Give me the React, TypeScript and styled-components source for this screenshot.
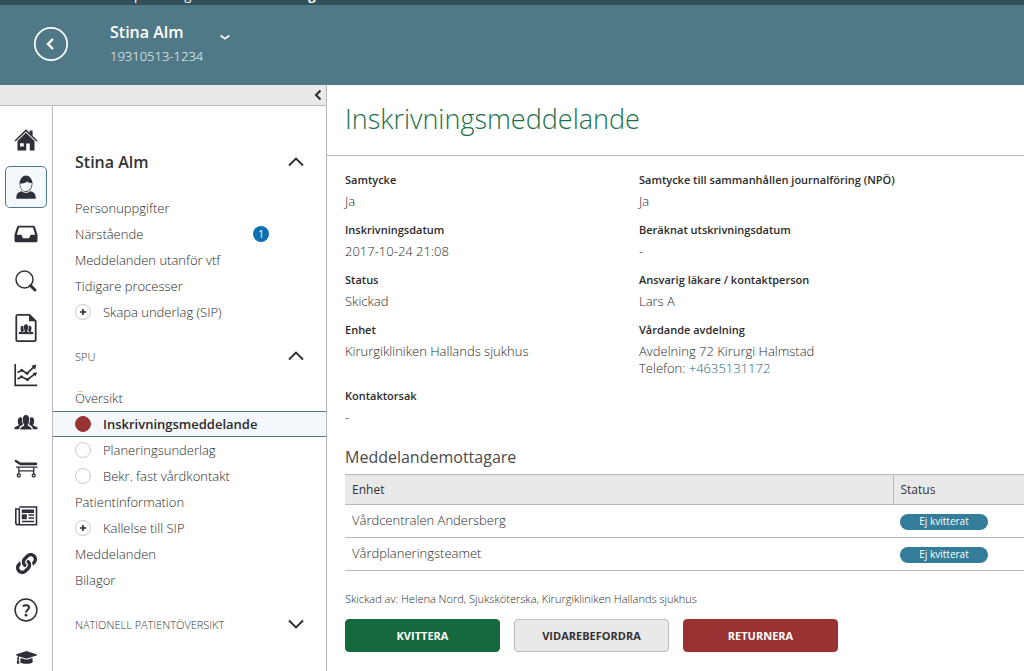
import React from "react";
import styled, { createGlobalStyle, css } from "styled-components";
import { FaGraduationCap, FaLink } from "react-icons/fa";

const GlobalStyle = createGlobalStyle`
  *, *::before, *::after { box-sizing: border-box; }
  body {
    margin: 0;
    background: #fff;
    color: #2b2b2b;
    font-family: "Open Sans", "Noto Sans", sans-serif;
    font-size: 13px;
    font-weight: 300;
    line-height: 17px;
  }
  button { font: inherit; color: inherit; cursor: pointer; }
  h1, h2, h3, p, ul, dl, dd { margin: 0; padding: 0; }
`;

const Page = styled.div`
  display: flex;
  flex-direction: column;
  height: 100vh;
  overflow: hidden;
`;

const SystemBar = styled.div`
  flex: none;
  display: flex;
  align-items: flex-end;
  gap: 56px;
  height: 5px;
  padding: 0 0 2px 60px;
  overflow: hidden;
  background: #33505a;
  color: #fff;
  font-weight: 400;
  line-height: 16px;
`;

const Header = styled.header`
  flex: none;
  display: flex;
  align-items: center;
  height: 80px;
  padding: 0 0 2px 33px;
  background: #4f7986;
  color: #fff;
`;

const BackButton = styled.button`
  display: flex;
  padding: 0;
  border: 0;
  background: none;
`;

const Patient = styled.div`
  width: 110px;
  margin-left: 41px;
  strong {
    display: block;
    font-size: 16px;
    font-weight: 600;
    line-height: 24px;
  }
  span {
    display: block;
    line-height: 24px;
  }
`;

const PatientMenu = styled.button`
  align-self: flex-start;
  display: flex;
  margin-top: 29px;
  padding: 0;
  border: 0;
  background: none;
`;

const Body = styled.div`
  flex: 1;
  display: flex;
  min-height: 0;
`;

const Sidebar = styled.aside`
  flex: none;
  display: flex;
  flex-direction: column;
  width: 327px;
  border-right: 1px solid #b9b9b9;
`;

const CollapseBar = styled.div`
  flex: none;
  display: flex;
  justify-content: flex-end;
  align-items: center;
  height: 21px;
  padding-right: 4px;
  border-bottom: 1px solid #b9b9b9;
  background: #e9e9e9;
`;

const SidebarColumns = styled.div`
  flex: 1;
  display: flex;
  min-height: 0;
`;

const IconRail = styled.nav`
  flex: none;
  display: flex;
  flex-direction: column;
  align-items: center;
  gap: 5px;
  width: 53px;
  padding-top: 13px;
  overflow-y: auto;
  scrollbar-width: none;
  border-right: 1px solid #b9b9b9;
`;

const RailButton = styled.button<{ $active?: boolean }>`
  flex: none;
  display: flex;
  align-items: center;
  justify-content: center;
  width: 42px;
  height: 42px;
  padding: 0;
  border: 1px solid ${(p) => (p.$active ? "#4f7986" : "transparent")};
  border-radius: 5px;
  background: ${(p) => (p.$active ? "#f4f9fd" : "none")};
  color: #2f2f38;
`;

const Menu = styled.nav`
  flex: 1;
  padding-top: 36px;
  overflow-y: auto;
  scrollbar-width: none;
`;

const SectionHead = styled.button<{ $minor?: boolean }>`
  display: flex;
  align-items: center;
  justify-content: space-between;
  width: 100%;
  height: 40px;
  padding: 0 22px;
  border: 0;
  background: none;
  color: #333;
  font-size: 16px;
  font-weight: 600;
  ${(p) =>
    p.$minor &&
    css`
      height: 32px;
      font-size: 11px;
      font-weight: 300;
    `}
`;

const MenuList = styled.ul`
  padding: 13px 0 15px;
  list-style: none;
`;

const MenuItem = styled.a<{ $active?: boolean }>`
  display: flex;
  align-items: center;
  height: 26px;
  padding: 0 57px 0 22px;
  border: solid transparent;
  border-width: 1px 0;
  color: inherit;
  text-decoration: none;
  ${(p) =>
    p.$active &&
    css`
      border-color: #4f7986;
      background: #f4f8fc;
      font-weight: 600;
    `}
`;

const Marker = styled.span<{ $filled?: boolean }>`
  display: flex;
  align-items: center;
  justify-content: center;
  width: 16px;
  height: 16px;
  margin-right: 12px;
  border: 1px solid ${(p) => (p.$filled ? "#993333" : "#c4cdd2")};
  border-radius: 50%;
  background: ${(p) => (p.$filled ? "#993333" : "#fff")};
`;

const CountBadge = styled.span`
  width: 16px;
  height: 16px;
  margin-left: auto;
  border-radius: 50%;
  background: #0f6fb0;
  color: #fff;
  font-size: 10px;
  font-weight: 400;
  line-height: 16px;
  text-align: center;
`;

const Main = styled.main`
  flex: 1;
  min-width: 0;
  overflow: hidden;
`;

const Title = styled.h1`
  height: 71px;
  padding: 16px 18px 0;
  border-bottom: 1px solid #b9b9b9;
  color: #1b7048;
  font-size: 27px;
  font-weight: 300;
  line-height: 36px;
`;

const Content = styled.div`
  padding: 15px 0 16px 18px;
`;

const Facts = styled.dl`
  display: grid;
  grid-template-columns: 294px 1fr;
  row-gap: 10px;
`;

const Fact = styled.div`
  min-height: 40px;
  dt {
    font-size: 11px;
    font-weight: 600;
    line-height: 18px;
  }
  dd {
    margin-top: 4px;
  }
  a {
    color: #1f6580;
    text-decoration: none;
  }
`;

const SubTitle = styled.h2`
  margin-top: 19px;
  color: #4a4a4a;
  font-size: 16px;
  font-weight: 400;
  line-height: 22px;
`;

const Table = styled.table`
  width: 100%;
  margin-top: 6px;
  border-collapse: collapse;
  th,
  td {
    height: 33px;
    padding: 0 7px;
    border: solid #b9b9b9;
    border-width: 1px 0;
    text-align: left;
  }
  td {
    padding-bottom: 2px;
  }
  th {
    height: 30px;
    background: #e9e9e9;
    color: #333;
    font-size: 12px;
    font-weight: 400;
  }
  th + th {
    width: 131px;
    border-left-width: 1px;
  }
`;

const Tag = styled.span`
  display: block;
  width: 88px;
  height: 16px;
  margin-top: 3px;
  border-radius: 8px;
  background: #337d9a;
  color: #fff;
  font-size: 10px;
  font-weight: 400;
  line-height: 15px;
  text-align: center;
`;

const SentBy = styled.p`
  margin-top: 19px;
  font-size: 11px;
`;

const Actions = styled.div`
  display: flex;
  gap: 14px;
  margin-top: 12px;
`;

const tones = {
  green: ["#14693f", "#14693f", "#fff"],
  grey: ["#e9e9e9", "#bdbdbd", "#333"],
  red: ["#993333", "#993333", "#fff"],
};

const ActionButton = styled.button<{ $tone: keyof typeof tones }>`
  width: 155px;
  height: 33px;
  padding: 0;
  border: 1px solid ${(p) => tones[p.$tone][1]};
  border-radius: 4px;
  background: ${(p) => tones[p.$tone][0]};
  color: ${(p) => tones[p.$tone][2]};
  font-size: 11px;
  font-weight: 700;
`;

const Chevron = ({ down }: { down?: boolean }) => (
  <svg width="16" height="10" viewBox="0 0 16 10" fill="none" stroke="#2b2b2b" strokeWidth="1.8">
    <path d={down ? "M1 1.5 8 8.5 15 1.5" : "M1 8.5 8 1.5 15 8.5"} />
  </svg>
);

const Plus = () => (
  <svg width="8" height="8" viewBox="0 0 8 8" stroke="#2b2b2b" strokeWidth="1.6">
    <path d="M4 1v6M1 4h6" />
  </svg>
);

const Svg = ({ children }: { children: React.ReactNode }) => (
  <svg width="24" height="24" viewBox="0 0 24 24" fill="currentColor">
    {children}
  </svg>
);

const HomeIcon = () => (
  <Svg>
    <path d="M.5 12.6 12 1.3l3.6 3.5V2.6h3v5.1l4.9 4.9-1 .9L12 3.4 1.5 13.5z" />
    <path fillRule="evenodd" d="M12 4.800 20.500 13v9.500h-4.700v-7h-3.600v7H3.500V13zM6 15.200v3.200h3.800v-3.200z" />
  </Svg>
);

const PersonIcon = () => (
  <Svg>
    <path d="M2.300 23.800c-.2-4.600 1.200-6.800 5.400-7.600h8.600c4.200.8 5.600 3 5.400 7.600z" />
    <ellipse cx="12" cy="9" rx="7.300" ry="8.900" fill="#f4f9fd" />
    <ellipse cx="12" cy="8.700" rx="6.500" ry="8.200" />
    <path fill="#f4f9fd" d="M6.300 8.400c3 .3 5.300-.5 6.800-1.900 1.200 1.100 2.800 1.600 4.600 1.600.2 4.800-2.200 8-5.700 8s-5.900-3-5.700-7.700z" />
  </Svg>
);

const InboxIcon = () => (
  <Svg>
    <path fillRule="evenodd" d="M4.800 3.700h14.400c.9 0 1.500.5 1.800 1.300l2.500 7.800v5.700c0 1.100-.7 1.800-1.800 1.800H2.300C1.200 20.300.5 19.600.5 18.500v-5.700L3 5c.3-.8.9-1.300 1.800-1.300zm.3 1.900-2.300 7.200h4.600l1.500 3.400h6.200l1.500-3.400h4.600l-2.300-7.200z" />
  </Svg>
);

const SearchIcon = () => (
  <Svg>
    <circle cx="10.500" cy="10.500" r="8.500" fill="none" stroke="currentColor" strokeWidth="1.500" />
    <path d="m16.500 16.500 4.500 4.500" stroke="currentColor" strokeWidth="3" strokeLinecap="round" />
  </Svg>
);

const groupPath =
  "M1 18c0-1.700 3.600-1.600 3.900-3.200C3.500 13.300 3 7.200 6.400 7.200c.7 0 1.200.2 1.600.6-.3 2.500 0 4.500 1 6.200-.4 1.600-3.300 1.500-3.600 4zM23 18c0-1.700-3.600-1.600-3.900-3.200 1.400-1.500 1.900-7.600-1.500-7.600-.7 0-1.200.2-1.600.6.3 2.500 0 4.500-1 6.200.4 1.600 3.300 1.500 3.600 4zM6.300 19.500c0-3.300 3.800-2.500 4-4.700C8.300 12.600 7.600 5 12 5s3.700 7.600 1.700 9.800c.2 2.200 4 1.400 4 4.700z";

const GroupIcon = () => (
  <Svg>
    <path d={groupPath} />
    <path d="M.5 17.300h4.700v2H.5zM18.800 17.300h4.700v2h-4.700z" />
  </Svg>
);

const GroupFileIcon = () => (
  <svg width="24" height="30" viewBox="0 0 24 30" fill="currentColor">
    <path d="M4 1.800h11.500l6.200 6.300V27c0 .8-.5 1.200-1.200 1.200H3.500c-.8 0-1.200-.4-1.200-1.200V3.200c0-.9.7-1.400 1.700-1.400z" fill="none" stroke="currentColor" strokeWidth="1.800" />
    <path d="M15 1.500v6.800h7z" />
    <path transform="translate(4 8) scale(.67)" d={groupPath} />
    <path d="M4.800 19.300h14.400v1.800H4.800z" />
  </svg>
);

const ChartIcon = () => (
  <Svg>
    <g fill="none" stroke="currentColor" strokeWidth="1.700">
      <path d="M1.200 1v21.300h22" />
      <path d="m3.500 9.500 4.300-2.300 5.200 3.200 6.500-6M3.500 16l4-2.300 6 3 7-5.500" />
    </g>
    <path d="m22.300 1.500-1.200 5.200-3.800-4zM23 9.200l-1.300 4.300-3-3.400z" />
    <circle cx="7.800" cy="7.300" r="1.500" />
    <circle cx="13" cy="10.300" r="1.500" />
    <circle cx="7.500" cy="13.800" r="1.500" />
    <circle cx="13.500" cy="16.600" r="1.500" />
  </Svg>
);

const StretcherIcon = () => (
  <Svg>
    <path d="M.8 3.300c.4-.7 1-.7 1.600-.4l4 2.700h15.800c1.500 0 1.500 2.600 0 2.600H6.200L1.300 5c-.6-.4-.8-1-.5-1.700z" />
    <g fill="none" stroke="currentColor" strokeWidth="1.300">
      <path d="M2 10.200h21.500M4.800 10v7M19.700 10v7M4.800 13.800h14.900" />
      <circle cx="4.800" cy="18.500" r="1.500" />
      <circle cx="19.700" cy="18.500" r="1.500" />
    </g>
  </Svg>
);

const NewsIcon = () => (
  <Svg>
    <g fill="none" stroke="currentColor" strokeWidth="1.600">
      <path d="M5.300 3h17.200v17.700H3.800c-1.300 0-2-.8-2-2V5h3.500v14c0 1-.6 1.700-1.500 1.700" />
      <path d="M14.500 11h5.500M14.500 14h5.500M8 17.500h12" />
    </g>
    <path d="M7.800 5.500H20v3.400H7.800zM7.800 10.300h5v5h-5z" />
  </Svg>
);

const HelpIcon = () => (
  <Svg>
    <circle cx="12" cy="12" r="10.900" fill="none" stroke="currentColor" strokeWidth="1.500" />
    <path d="M8.800 8.200c1.900-1.500 6.300-1.600 6.300 1.300 0 2.200-3.100 2.300-3.100 4.900" fill="none" stroke="currentColor" strokeWidth="2" />
    <circle cx="12" cy="17.200" r="1.400" />
  </Svg>
);

const rail = [
  { label: "Hem", icon: <HomeIcon /> },
  { label: "Patient", icon: <PersonIcon />, active: true },
  { label: "Inkorg", icon: <InboxIcon /> },
  { label: "Sök", icon: <SearchIcon /> },
  { label: "Gruppdokument", icon: <GroupFileIcon /> },
  { label: "Statistik", icon: <ChartIcon /> },
  { label: "Grupper", icon: <GroupIcon /> },
  { label: "Vårdplatser", icon: <StretcherIcon /> },
  { label: "Nyheter", icon: <NewsIcon /> },
  { label: "Länkar", icon: <FaLink size={21} /> },
  { label: "Hjälp", icon: <HelpIcon /> },
  { label: "Utbildning", icon: <FaGraduationCap size={21} /> },
];

type Item = { text: string; marker?: "plus" | "empty" | "filled"; count?: number };

const patientItems: Item[] = [
  { text: "Personuppgifter" },
  { text: "Närstående", count: 1 },
  { text: "Meddelanden utanför vtf" },
  { text: "Tidigare processer" },
  { text: "Skapa underlag (SIP)", marker: "plus" },
];

const spuItems: Item[] = [
  { text: "Översikt" },
  { text: "Inskrivningsmeddelande", marker: "filled" },
  { text: "Planeringsunderlag", marker: "empty" },
  { text: "Bekr. fast vårdkontakt", marker: "empty" },
  { text: "Patientinformation" },
  { text: "Kallelse till SIP", marker: "plus" },
  { text: "Meddelanden" },
  { text: "Bilagor" },
];

const Items = ({ items }: { items: Item[] }) => (
  <MenuList>
    {items.map((item) => (
      <li key={item.text}>
        <MenuItem href="#" $active={item.marker === "filled"}>
          {item.marker && (
            <Marker $filled={item.marker === "filled"}>{item.marker === "plus" && <Plus />}</Marker>
          )}
          {item.text}
          {item.count && <CountBadge>{item.count}</CountBadge>}
        </MenuItem>
      </li>
    ))}
  </MenuList>
);

const facts: [string, React.ReactNode][] = [
  ["Samtycke", "Ja"],
  ["Samtycke till sammanhållen journalföring (NPÖ)", "Ja"],
  ["Inskrivningsdatum", "2017-10-24 21:08"],
  ["Beräknat utskrivningsdatum", "-"],
  ["Status", "Skickad"],
  ["Ansvarig läkare / kontaktperson", "Lars A"],
  ["Enhet", "Kirurgikliniken Hallands sjukhus"],
  [
    "Vårdande avdelning",
    <>
      Avdelning 72 Kirurgi Halmstad
      <br />
      Telefon: <a href="tel:+4635131172">+4635131172</a>
    </>,
  ],
  ["Kontaktorsak", "-"],
];

const recipients = ["Vårdcentralen Andersberg", "Vårdplaneringsteamet"];

export default function App() {
  return (
    <Page>
      <GlobalStyle />
      <SystemBar>
        <span>Samordnad planering</span>
        <strong>Utbildning</strong>
      </SystemBar>
      <Header>
        <BackButton aria-label="Tillbaka">
          <svg width="36" height="36" viewBox="0 0 36 36" fill="none" stroke="#fff">
            <circle cx="18" cy="18" r="16.200" strokeWidth="1.700" />
            <path d="m20 13-5 5 5 5" strokeWidth="2.400" />
          </svg>
        </BackButton>
        <Patient>
          <strong>Stina Alm</strong>
          <span>19310513-1234</span>
        </Patient>
        <PatientMenu aria-label="Visa patientuppgifter">
          <svg width="10" height="7" viewBox="0 0 10 7" fill="none" stroke="#fff" strokeWidth="1.700">
            <path d="M.6 1.500 5 4.600l4.400-3.100" />
          </svg>
        </PatientMenu>
      </Header>
      <Body>
        <Sidebar>
          <CollapseBar>
            <BackButton aria-label="Fäll ihop menyn">
              <svg width="8" height="12" viewBox="0 0 8 12" fill="none" stroke="#2b2b2b" strokeWidth="2">
                <path d="M6.500 1.500 2 6l4.500 4.500" />
              </svg>
            </BackButton>
          </CollapseBar>
          <SidebarColumns>
            <IconRail>
              {rail.map((r) => (
                <RailButton key={r.label} aria-label={r.label} $active={r.active}>
                  {r.icon}
                </RailButton>
              ))}
            </IconRail>
            <Menu>
              <SectionHead>
                Stina Alm <Chevron />
              </SectionHead>
              <Items items={patientItems} />
              <SectionHead $minor>
                SPU <Chevron />
              </SectionHead>
              <Items items={spuItems} />
              <SectionHead $minor>
                NATIONELL PATIENTÖVERSIKT <Chevron down />
              </SectionHead>
            </Menu>
          </SidebarColumns>
        </Sidebar>
        <Main>
          <Title>Inskrivningsmeddelande</Title>
          <Content>
            <Facts>
              {facts.map(([term, value]) => (
                <Fact key={term}>
                  <dt>{term}</dt>
                  <dd>{value}</dd>
                </Fact>
              ))}
            </Facts>
            <SubTitle>Meddelandemottagare</SubTitle>
            <Table>
              <thead>
                <tr>
                  <th scope="col">Enhet</th>
                  <th scope="col">Status</th>
                </tr>
              </thead>
              <tbody>
                {recipients.map((name) => (
                  <tr key={name}>
                    <td>{name}</td>
                    <td>
                      <Tag>Ej kvitterat</Tag>
                    </td>
                  </tr>
                ))}
              </tbody>
            </Table>
            <SentBy>Skickad av: Helena Nord, Sjuksköterska, Kirurgikliniken Hallands sjukhus</SentBy>
            <Actions>
              <ActionButton $tone="green">KVITTERA</ActionButton>
              <ActionButton $tone="grey">VIDAREBEFORDRA</ActionButton>
              <ActionButton $tone="red">RETURNERA</ActionButton>
            </Actions>
          </Content>
        </Main>
      </Body>
    </Page>
  );
}
